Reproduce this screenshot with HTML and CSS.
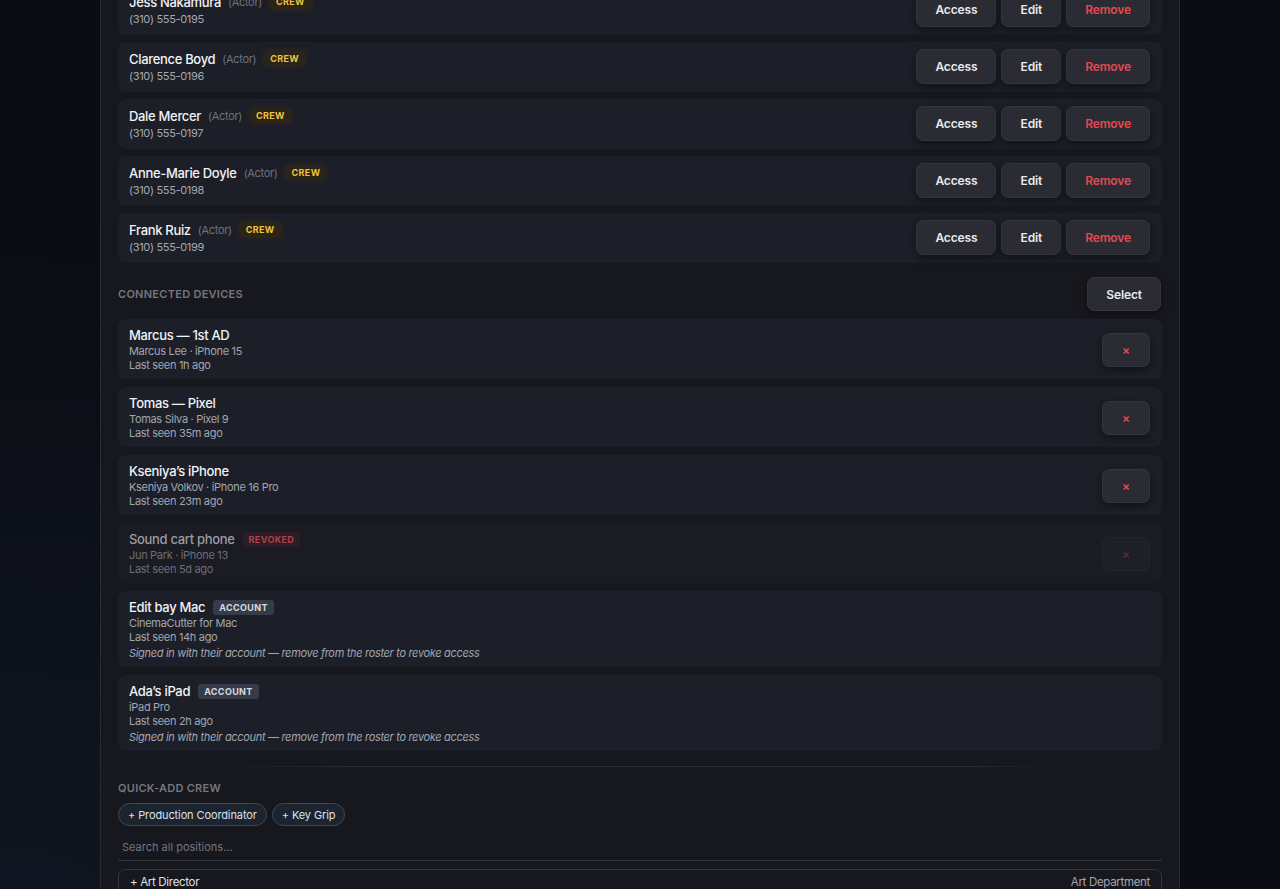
FILE: index.html
```html
<!DOCTYPE html>
<html lang="en">
<head>
    <meta charset="UTF-8">
    <meta name="viewport" content="width=device-width, initial-scale=1.0">
    <title>Crew &amp; Devices</title>
    <link rel="stylesheet" href="styles.css">
</head>
<body>
    <div class="panel">
        <!-- Roster -->
        <div class="list crew-list">
            <div class="row crew-row">
                <div class="info">
                    <div class="name">Jess Nakamura <span class="role">(Actor)</span> <span class="badge crew">CREW</span></div>
                    <div class="phone">(310) 555-0195</div>
                </div>
                <div class="actions">
                    <button class="btn">Access</button>
                    <button class="btn">Edit</button>
                    <button class="btn danger">Remove</button>
                </div>
            </div>
            <div class="row crew-row">
                <div class="info">
                    <div class="name">Clarence Boyd <span class="role">(Actor)</span> <span class="badge crew">CREW</span></div>
                    <div class="phone">(310) 555-0196</div>
                </div>
                <div class="actions">
                    <button class="btn">Access</button>
                    <button class="btn">Edit</button>
                    <button class="btn danger">Remove</button>
                </div>
            </div>
            <div class="row crew-row">
                <div class="info">
                    <div class="name">Dale Mercer <span class="role">(Actor)</span> <span class="badge crew">CREW</span></div>
                    <div class="phone">(310) 555-0197</div>
                </div>
                <div class="actions">
                    <button class="btn">Access</button>
                    <button class="btn">Edit</button>
                    <button class="btn danger">Remove</button>
                </div>
            </div>
            <div class="row crew-row">
                <div class="info">
                    <div class="name">Anne-Marie Doyle <span class="role">(Actor)</span> <span class="badge crew">CREW</span></div>
                    <div class="phone">(310) 555-0198</div>
                </div>
                <div class="actions">
                    <button class="btn">Access</button>
                    <button class="btn">Edit</button>
                    <button class="btn danger">Remove</button>
                </div>
            </div>
            <div class="row crew-row">
                <div class="info">
                    <div class="name">Frank Ruiz <span class="role">(Actor)</span> <span class="badge crew">CREW</span></div>
                    <div class="phone">(310) 555-0199</div>
                </div>
                <div class="actions">
                    <button class="btn">Access</button>
                    <button class="btn">Edit</button>
                    <button class="btn danger">Remove</button>
                </div>
            </div>
        </div>

        <!-- Devices -->
        <div class="section-head">
            <span class="section-title">Connected Devices</span>
            <button class="btn">Select</button>
        </div>
        <div class="list">
            <div class="row device-row">
                <div class="info">
                    <div class="name">Marcus — 1st AD</div>
                    <div class="sub">Marcus Lee · iPhone 15</div>
                    <div class="sub">Last seen 1h ago</div>
                </div>
                <button class="btn revoke">×</button>
            </div>
            <div class="row device-row">
                <div class="info">
                    <div class="name">Tomas — Pixel</div>
                    <div class="sub">Tomas Silva · Pixel 9</div>
                    <div class="sub">Last seen 35m ago</div>
                </div>
                <button class="btn revoke">×</button>
            </div>
            <div class="row device-row">
                <div class="info">
                    <div class="name">Kseniya’s iPhone</div>
                    <div class="sub">Kseniya Volkov · iPhone 16 Pro</div>
                    <div class="sub">Last seen 23m ago</div>
                </div>
                <button class="btn revoke">×</button>
            </div>
            <div class="row device-row revoked">
                <div class="info">
                    <div class="name">Sound cart phone <span class="badge red">REVOKED</span></div>
                    <div class="sub">Jun Park · iPhone 13</div>
                    <div class="sub">Last seen 5d ago</div>
                </div>
                <button class="btn revoke" disabled>×</button>
            </div>
            <div class="row device-row">
                <div class="info">
                    <div class="name">Edit bay Mac <span class="badge account">ACCOUNT</span></div>
                    <div class="sub">CinemaCutter for Mac</div>
                    <div class="sub">Last seen 14h ago</div>
                    <div class="note">Signed in with their account — remove from the roster to revoke access</div>
                </div>
            </div>
            <div class="row device-row">
                <div class="info">
                    <div class="name">Ada’s iPad <span class="badge account">ACCOUNT</span></div>
                    <div class="sub">iPad Pro</div>
                    <div class="sub">Last seen 2h ago</div>
                    <div class="note">Signed in with their account — remove from the roster to revoke access</div>
                </div>
            </div>
        </div>

        <hr class="divider">

        <!-- Quick add -->
        <div class="section-title quick-title">Quick-Add Crew</div>
        <div class="chips">
            <button class="chip">+ Production Coordinator</button>
            <button class="chip">+ Key Grip</button>
        </div>
        <input class="search" type="text" placeholder="Search all positions...">
        <div class="position">
            <span>+ Art Director</span>
            <span class="dept">Art Department</span>
        </div>
    </div>
</body>
</html>
```

FILE: styles.css
```css
* {
    box-sizing: border-box;
}
body {
    margin: 0;
    min-height: 100vh;
    font-family: Inter, "Noto Sans", sans-serif;
    letter-spacing: -0.02em;
    color: #eceef2;
    background: radial-gradient(ellipse at 0% 100%, #101622 0%, #0a0c12 55%), #0a0c12;
    overflow: hidden;
}
.panel {
    width: 1080px;
    margin: -15px auto 0;
    padding: 0 17px 40px;
    background: #17171e;
    border-left: 1px solid #2a2a31;
    border-right: 1px solid #2a2a31;
    min-height: 960px;
}
.list {
    display: flex;
    flex-direction: column;
    gap: 7px;
}
.row {
    display: flex;
    align-items: center;
    justify-content: space-between;
    background: #1c1f28;
    border-radius: 8px;
}
.crew-row {
    padding: 7px 12px 8px 11px;
}
.name {
    font-size: 13px;
    font-weight: 500;
    color: #f1f2f5;
    display: flex;
    align-items: center;
}
.crew-row .name {
    line-height: 18px;
}
.phone {
    font-size: 11px;
    line-height: 16px;
    color: #a5a8b0;
}
.role {
    font-size: 11px;
    font-weight: 400;
    color: #6f727c;
    margin-left: 7px;
}
.badge {
    font-size: 9px;
    font-weight: 700;
    letter-spacing: 0.04em;
    padding: 2px 6px;
    border-radius: 3px;
    margin-left: 8px;
    line-height: 11px;
}
.badge.crew {
    color: #f0c23c;
    background: #2a2419;
    box-shadow: 0 0 6px rgba(90, 60, 20, 0.35);
}
.badge.red {
    color: #b0414c;
    background: #2c1c25;
}
.badge.account {
    color: #d6dae2;
    background: #353b47;
}
.actions {
    display: flex;
    gap: 5px;
}
.btn {
    font-family: inherit;
    font-size: 12px;
    font-weight: 600;
    letter-spacing: -0.01em;
    color: #e8e9ed;
    height: 35px;
    padding: 0 18px;
    background: #2b2c33;
    border: 1px solid #34353c;
    border-radius: 7px;
    box-shadow: 0 3px 8px rgba(0, 0, 0, 0.45);
    cursor: pointer;
}
.btn.danger {
    color: #e5484f;
}
.section-head {
    display: flex;
    align-items: center;
    justify-content: space-between;
    margin: 14px 1px 8px 0;
}
.section-head .btn {
    height: 34px;
}
.section-title {
    font-size: 11px;
    font-weight: 600;
    letter-spacing: 0.025em;
    text-transform: uppercase;
    color: #75767f;
}
.device-row {
    padding: 8px 12px 7px 11px;
}
.device-row + .device-row {
    margin-top: 1px;
}
.device-row .name {
    line-height: 17px;
}
.sub {
    font-size: 11px;
    line-height: 14px;
    color: #a3a6ae;
}
.note {
    font-size: 11px;
    line-height: 14px;
    font-style: italic;
    color: #a3a6ae;
    margin-top: 2px;
}
.btn.revoke {
    width: 48px;
    height: 34px;
    padding: 0;
    color: #e5484f;
    font-size: 12px;
}

/* revoked device: dimmed colours instead of opacity */
.revoked {
    background: #1a1b23;
}
.revoked .name {
    color: #9a9ca4;
}
.revoked .sub {
    color: #6b6e77;
}
.revoked .btn.revoke {
    background: #1e1f27;
    border-color: #23242c;
    color: #5a2a33;
    box-shadow: none;
}
.divider {
    border: 0;
    height: 1px;
    margin: 15px 0 14px;
    background: linear-gradient(90deg, transparent 8%, #2c2d36 25%, #2c2d36 80%, transparent 90%);
}
.quick-title {
    line-height: 14px;
}
.chips {
    display: flex;
    gap: 5px;
    margin-top: 8px;
}
.chip {
    font-family: inherit;
    font-size: 11px;
    letter-spacing: -0.01em;
    color: #dde1e7;
    height: 23px;
    padding: 0 9px;
    background: #1c2430;
    border: 1px solid #3c4856;
    border-radius: 12px;
}
.search {
    display: block;
    width: 100%;
    margin-top: 10px;
    padding: 4px 4px 6px;
    font-family: inherit;
    font-size: 11px;
    color: #d0d2d8;
    background: transparent;
    border: 0;
    border-bottom: 1px solid #33343c;
    outline: none;
}
.search::placeholder {
    color: #74767f;
}
.position {
    display: flex;
    justify-content: space-between;
    margin-top: 8px;
    padding: 5px 11px;
    font-size: 11.5px;
    color: #dfe1e6;
    border: 1px solid #36363f;
    border-radius: 7px;
}
.dept {
    color: #a3a6ae;
}
```
